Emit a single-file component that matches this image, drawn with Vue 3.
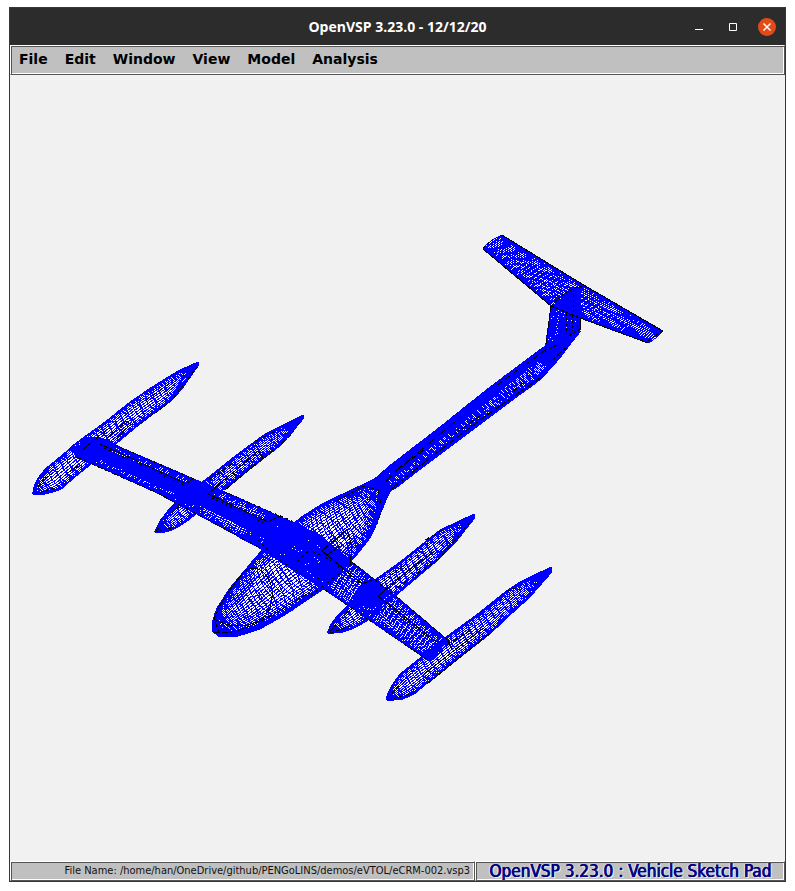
<script setup>
const menus = ['File', 'Edit', 'Window', 'View', 'Model', 'Analysis']

// Each surface is described by two silhouette rails running root to tip.
const surfaces = [
  {
    name: 'pod-1', along: 16, around: 28, bulge: 0.3,
    a: [[33, 492], [35, 482], [45, 469], [60, 457], [76, 443], [105, 422], [130, 402], [152, 387], [165, 379], [180, 370], [198, 362]],
    b: [[33, 494], [40, 495], [50, 493], [60, 490], [75, 477], [90, 465], [117, 443], [140, 424], [157, 411], [170, 402], [182, 389], [198, 366]]
  },
  {
    name: 'pod-2', along: 16, around: 26, bulge: 0.3,
    a: [[155, 531], [160, 521], [170, 508], [180, 498], [205, 480], [235, 456], [265, 434], [285, 424], [303, 415]],
    b: [[155, 532], [163, 533], [175, 529], [190, 519], [222, 491], [240, 477], [263, 459], [280, 446], [290, 435], [303, 419]]
  },
  {
    name: 'pod-3', along: 16, around: 28, bulge: 0.3,
    a: [[328, 631], [332, 622], [345, 608], [372, 582], [400, 562], [425, 542], [440, 530], [455, 523], [474, 514]],
    b: [[328, 633], [340, 633], [355, 628], [370, 619], [393, 598], [420, 575], [438, 560], [455, 543], [474, 519]]
  },
  {
    name: 'pod-4', along: 17, around: 30, bulge: 0.3,
    a: [[386, 699], [390, 688], [400, 674], [420, 658], [446, 637], [475, 616], [505, 592], [520, 582], [551, 567]],
    b: [[387, 700], [400, 700], [413, 695], [425, 685], [450, 665], [490, 634], [510, 615], [530, 597], [551, 573]]
  },
  {
    name: 'fuselage', along: 34, around: 48, bulge: 0.3,
    a: [[213, 632], [212, 622], [217, 608], [230, 588], [245, 570], [262, 550], [280, 535], [300, 518], [320, 505], [340, 495], [365, 485], [377, 477], [388, 470]],
    b: [[213, 632], [220, 637], [235, 637], [260, 629], [285, 615], [310, 598], [325, 588], [345, 568], [360, 551], [372, 535], [380, 515], [386, 500], [390, 492]]
  },
  {
    name: 'boom', along: 24, around: 70, bulge: 0.4,
    a: [[377, 477], [388, 467], [440, 427], [490, 387], [545, 346], [570, 331]],
    b: [[388, 492], [396, 488], [460, 438], [540, 380], [560, 358], [580, 331]]
  },
  {
    name: 'wing-left', along: 22, around: 90, bulge: 0.12,
    a: [[88, 438], [100, 437], [115, 445], [194, 479], [225, 492], [290, 521], [318, 540]],
    b: [[73, 451], [76, 457], [91, 463], [155, 492], [180, 505], [258, 547], [300, 574]]
  },
  {
    name: 'wing-middle', along: 30, around: 60, bulge: 0.1,
    a: [[270, 515], [290, 521], [320, 535], [352, 562]],
    b: [[240, 538], [258, 547], [290, 568], [322, 588]]
  },
  {
    name: 'wing-right', along: 22, around: 64, bulge: 0.12,
    a: [[318, 535], [352, 562], [397, 597], [437, 631], [449, 641]],
    b: [[296, 572], [322, 588], [355, 610], [410, 648], [429, 661]]
  },
  {
    name: 'tail-left', along: 20, around: 44, bulge: 0.1,
    a: [[502, 235], [582, 284]],
    b: [[483, 248], [551, 306]]
  },
  {
    name: 'tail-right', along: 20, around: 42, bulge: 0.1,
    a: [[582, 284], [663, 331]],
    b: [[551, 306], [580, 318], [648, 343]]
  },
  {
    name: 'fin', along: 15, around: 34, bulge: 0.1,
    a: [[551, 306], [545, 350]],
    b: [[581, 286], [580, 332]]
  }
]

// Areas where the mesh lines run together.
const solids = [
  '84,440 100,438 113,446 100,462 76,455 74,450',
  '92,456 108,450 200,488 270,524 262,536 180,496',
  '190,479 218,490 190,506 172,497',
  '268,536 292,521 312,532 290,550 262,544',
  '310,566 330,560 340,572 328,582 314,576',
  '366,578 388,594 372,610 352,598',
  '422,655 446,640 434,660',
  '213,632 212,622 222,632 240,632 280,614 324,585 310,598 285,615 260,629 235,637 220,637',
  '340,495 377,477 389,469 388,492 382,512 379,492 366,487',
  '386,470 545,348 551,350 394,478',
  '396,486 540,376 560,350 580,328 579,334 560,358 540,380 396,488',
  '545,350 572,331 580,320 580,331 560,358 550,366 536,362',
  '552,306 566,294 581,286 580,314 570,310'
]

// Feature edges drawn over the mesh.
const features = [
  { d: 'M100 444L135 460L186 484L194 478' },
  { d: 'M208 494L268 522L280 516' },
  { d: 'M322 551L362 584L372 580' },
  { d: 'M378 596L436 642L449 641' },
  { d: 'M104 448L186 486M212 498L266 524M326 557L360 584M384 603L430 639', dash: '2 3' },
  { d: 'M76 457L155 492L180 505L262 549', dash: '5 3' },
  { d: 'M115 445L194 479M225 492L292 521', dash: '3 3' },
  { d: 'M325 590L410 648L429 661', dash: '3 3' },
  { d: 'M352 562L397 597L449 641', dash: '4 3' },
  { d: 'M107 438L126 421L131 424L115 440' },
  { d: 'M66 474L78 466M145 401L172 382M82 450L112 426', dash: '6 2' },
  { d: 'M34 492L45 478L52 474M34 494L55 488M140 424L170 402L198 366', dash: '4 2' },
  { d: 'M208 494L258 451L263 458L225 490M232 473L238 476' },
  { d: 'M256 441L276 431M208 480L232 464M263 459L290 436L302 419', dash: '5 3' },
  { d: 'M156 531L168 516L182 504M157 532L174 527', dash: '4 2' },
  { d: 'M378 596L408 571L403 566L382 582M408 571L433 552' },
  { d: 'M425 540L445 529M397 588L440 558L470 522', dash: '5 3' },
  { d: 'M330 631L345 614L358 604M330 633L350 626', dash: '4 2' },
  { d: 'M424 674L483 628L489 634L427 684M448 640L452 650' },
  { d: 'M505 592L522 585M446 646L470 630', dash: '5 3' },
  { d: 'M388 698L402 682L414 670M388 700L413 693', dash: '4 2' },
  { d: 'M214 619L219 607L232 587L243 573C250 566 258 567 264 573C270 579 273 587 272 597C271 609 267 619 254 623C238 629 222 624 214 619' },
  { d: 'M215 621L219 632M214 632C230 637 262 623 288 605L310 592', dash: '6 2' },
  { d: 'M335 502L364 486L378 490L382 509L377 524', dash: '7 2' },
  { d: 'M322 551L347 529L352 548L350 565M326 556L340 546' },
  { d: 'M258 540L276 558L306 577L330 580', dash: '2 4' },
  { d: 'M296 562L310 550L330 560M310 596L342 572', dash: '3 4' },
  { d: 'M386 482L392 474L462 416', dash: '9 5' },
  { d: 'M390 490L430 458L480 420L540 378', dash: '16 3' },
  { d: 'M496 386L544 351L560 344', dash: '8 3' },
  { d: 'M397 470L424 450M454 434L484 413M512 392L524 382M550 362L568 346', dash: '7 2' },
  { d: 'M502 235L582 284L663 331' },
  { d: 'M483 249L551 306L580 318L648 343' },
  { d: 'M551 306L548 330L545 352', dash: '6 2' },
  { d: 'M551 306C558 298 568 289 582 286', dash: '3 2' },
  { d: 'M580 318L580 329L569 336' },
  { d: 'M566 313L566 334M569 313L569 334M572 315L572 331M577 315L577 330', dash: '3 2' },
  { d: 'M573 290L573 312', dash: '2 3' },
  { d: 'M483 248L492 240L502 235M648 341L662 331', dash: '3 2' }
]

function sampler(rail) {
  const lengths = [0]
  for (let i = 1; i < rail.length; i++) {
    lengths.push(lengths[i - 1] + Math.hypot(rail[i][0] - rail[i - 1][0], rail[i][1] - rail[i - 1][1]))
  }
  const total = lengths[lengths.length - 1]
  return (t) => {
    const want = t * total
    let i = 1
    while (i < rail.length - 1 && lengths[i] < want) i++
    const k = (want - lengths[i - 1]) / (lengths[i] - lengths[i - 1])
    return [
      rail[i - 1][0] + (rail[i][0] - rail[i - 1][0]) * k,
      rail[i - 1][1] + (rail[i][1] - rail[i - 1][1]) * k
    ]
  }
}

const fmt = (p) => `${p[0].toFixed(1)} ${p[1].toFixed(1)}`

function mesh({ a, b, along, around, bulge }) {
  const pa = sampler(a)
  const pb = sampler(b)
  let d = ''
  for (let j = 0; j <= along; j++) {
    const s = (1 - Math.cos((Math.PI * j) / along)) / 2
    for (let i = 0; i <= 30; i++) {
      const p = pa(i / 30)
      const q = pb(i / 30)
      d += (i ? 'L' : 'M') + fmt([p[0] + (q[0] - p[0]) * s, p[1] + (q[1] - p[1]) * s])
    }
  }
  for (let i = 0; i <= around; i++) {
    const p = pa(i / around)
    const q = pb(i / around)
    const dx = (q[1] - p[1]) * bulge
    const dy = (p[0] - q[0]) * bulge
    const mx = (p[0] + q[0]) / 2
    const my = (p[1] + q[1]) / 2
    d += `M${fmt(p)}Q${fmt([mx - dx, my - dy])} ${fmt(q)}`
    if (i % 2 === 0) d += `M${fmt(p)}Q${fmt([mx + dx, my + dy])} ${fmt(q)}`
  }
  return d
}

const shapes = surfaces.map((s) => ({
  name: s.name,
  outline: [...s.a, ...[...s.b].reverse()].map((p) => p.join(',')).join(' '),
  mesh: mesh(s)
}))
</script>

<template>
  <div class="desktop">
    <main class="window">
      <header class="titlebar">
        <h1 class="title">OpenVSP 3.23.0 - 12/12/20</h1>
        <div class="controls">
          <button type="button" class="control" aria-label="Minimize">
            <svg viewBox="0 0 18 18" width="18" height="18"><path d="M5 11.5H13" /></svg>
          </button>
          <button type="button" class="control" aria-label="Maximize">
            <svg viewBox="0 0 18 18" width="18" height="18"><path d="M5.500 5.500H12.500V12.500H5.500Z" /></svg>
          </button>
          <button type="button" class="control close" aria-label="Close">
            <svg viewBox="0 0 18 18" width="18" height="18"><path d="M5.500 5.500L12.500 12.500M12.500 5.500L5.500 12.500" /></svg>
          </button>
        </div>
      </header>

      <nav class="menubar engraved" aria-label="Main menu">
        <button v-for="m in menus" :key="m" type="button" class="menu">{{ m }}</button>
      </nav>

      <section class="viewport">
        <svg class="model" viewBox="10 75 775 786" role="img" aria-label="Aircraft wireframe">
          <g shape-rendering="crispEdges">
            <polygon v-for="s in shapes" :key="s.name" class="hull" :points="s.outline" />
            <path v-for="s in shapes" :key="s.name" class="wire" :d="s.mesh" />
            <polygon v-for="(p, i) in solids" :key="i" class="solid" :points="p" />
            <path v-for="(f, i) in features" :key="i" class="feature" :d="f.d" :stroke-dasharray="f.dash" />
          </g>
        </svg>
      </section>

      <footer class="statusbar">
        <div class="file engraved">File Name: /home/han/OneDrive/github/PENGoLINS/demos/eVTOL/eCRM-002.vsp3</div>
        <div class="brand engraved">OpenVSP 3.23.0 : Vehicle Sketch Pad</div>
      </footer>
    </main>
  </div>
</template>

<style>
body {
  background: #fff;
}
</style>

<style scoped>
.desktop {
  display: flex;
  box-sizing: border-box;
  min-height: 100vh;
  padding: 7px 9px 9px;
}
.window {
  display: flex;
  flex: 1;
  flex-direction: column;
  min-width: 0;
  border: 1px solid #373737;
  background: #f1f1f1;
}
.titlebar {
  display: grid;
  grid-template-columns: 1fr auto 1fr;
  align-items: center;
  height: 37px;
  background: #2c2c2c;
}
.title {
  grid-column: 2;
  margin: 0;
  color: #fff;
  font: bold 14px/20px "Open Sans", "Noto Sans", sans-serif;
}
.controls {
  display: flex;
  justify-content: flex-end;
  gap: 16px;
  padding-right: 9px;
}
.control {
  width: 18px;
  height: 18px;
  padding: 0;
  border: 0;
  border-radius: 50%;
  background: none;
}
.control svg {
  display: block;
  fill: none;
  stroke: #fff;
  stroke-width: 1;
}
.close {
  background: #e24a18;
}
.close svg {
  stroke-width: 1.5;
}
.engraved {
  border: 1px solid;
  border-color: #fff #555 #555 #fff;
  background: #c0c0c0;
  box-shadow: inset 1px 1px #555, inset -1px -1px #fff;
}
.menubar {
  display: flex;
  align-items: center;
  gap: 17px;
  height: 28px;
  padding: 0 8px;
}
.menu {
  padding: 0 0 2px;
  border: 0;
  background: none;
  color: #000;
  font: bold 14px/20px "DejaVu Sans", sans-serif;
}
.viewport {
  display: flex;
  flex: 1;
  min-height: 0;
}
.model {
  display: block;
  width: 100%;
}
.hull {
  fill: #fff;
}
.wire {
  fill: none;
  stroke: #00f;
  stroke-width: 1;
}
.solid {
  fill: #00f;
}
.feature {
  fill: none;
  stroke: #000;
  stroke-width: 1;
}
.statusbar {
  display: grid;
  grid-template-columns: 3fr 2fr;
  height: 20px;
}
.statusbar > div {
  overflow: hidden;
  box-sizing: border-box;
  white-space: nowrap;
}
.file {
  padding-right: 4px;
  color: #111;
  font: 11px/18px "DejaVu Sans Condensed", "DejaVu Sans", sans-serif;
  text-align: right;
}
.brand {
  color: #000080;
  font: 17px/18px "DejaVu Sans Condensed", "DejaVu Sans", sans-serif;
  text-align: center;
  text-shadow: 1px 0 #000080, -1px 0 #eee, 2px 1px #eee;
}
</style>
